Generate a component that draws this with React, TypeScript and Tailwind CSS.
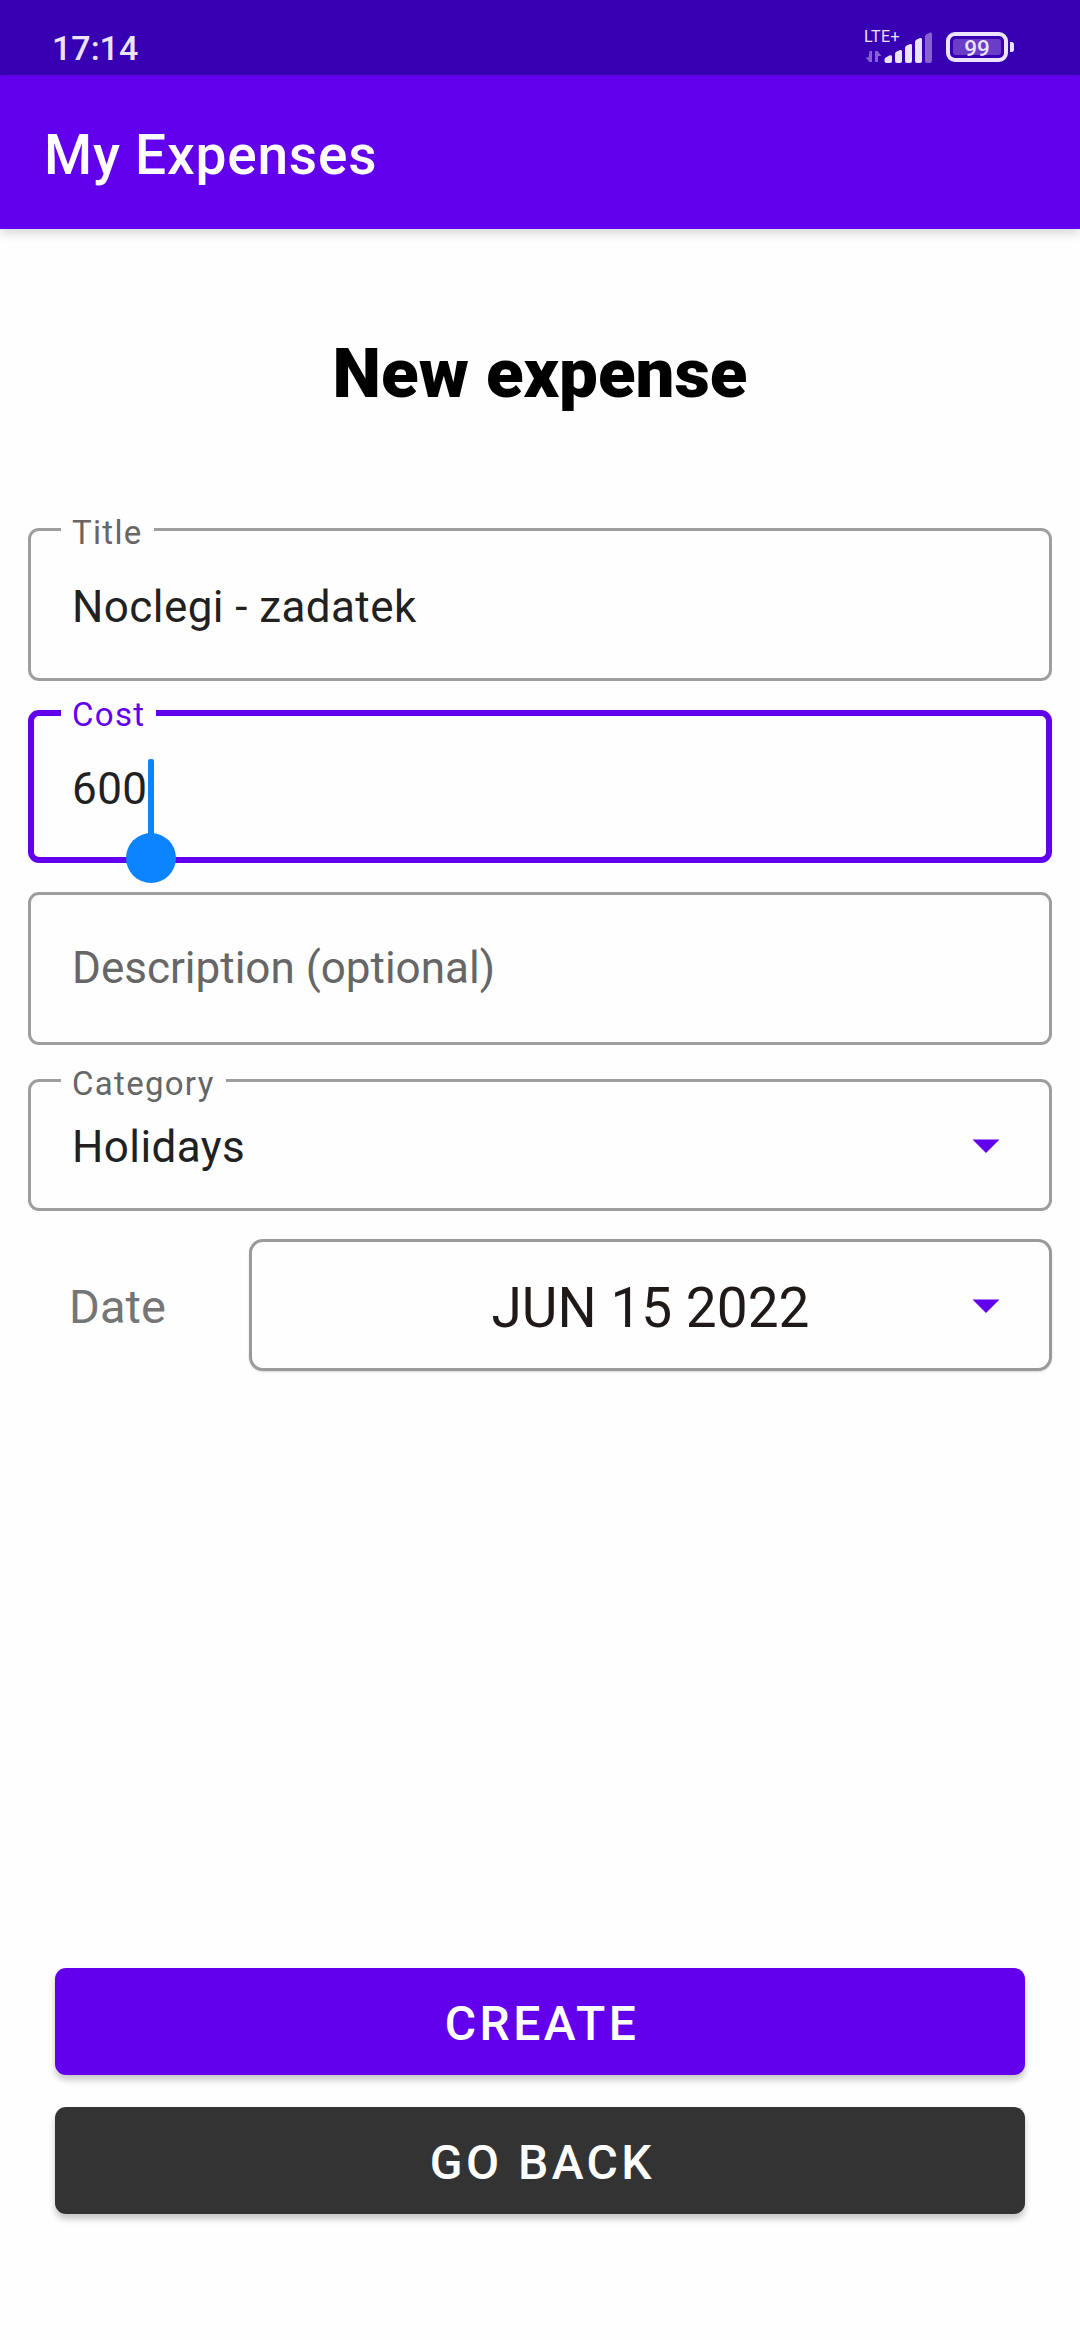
import type { ReactNode } from "react";

function StatusBar() {
  return (
    <div className="flex h-[75px] items-start justify-between bg-[#3700b3] pl-[52px] pr-[66px] text-[#ebe3f8]">
      <span className="mt-[28px] text-[34px] leading-[41px] font-medium">17:14</span>
      <svg className="mt-[28px] h-[38px] w-[152px]" viewBox="862 28 152 38">
        <text x="864" y="42" fontSize="16" fill="#ebe3f8" textLength="35.500">LTE+</text>
        <g fill="#8662d1">
          <path d="M869.5 51v11l-4-4.500h3zM872 51v11h-2.500l-4-4.500h4V51z" />
          <path d="M875 62V51h2.500l4 5h-3.500v6z" />
          <path d="M925 44V36.500q0-1.500 1.500-2.200l3.500-1.800q2-.5 2 1.500V61q0 2-2 2h-3q-2 0-2-2z" />
        </g>
        <g fill="#ebe3f8">
          <path d="M884.500 59.500q0-1 1-1.700l3.500-2.300q3-1 3 1V61q0 2-2 2h-3.500q-2 0-2-2z" />
          <path d="M895 54q0-1.500 1.200-2.200l3.300-1.600q2.500-.7 2.500 1.300V61q0 2-2 2h-3q-2 0-2-2z" />
          <path d="M905 48q0-1.500 1.200-2.200l3.300-1.600q2.500-.7 2.500 1.300V61q0 2-2 2h-3q-2 0-2-2z" />
          <path d="M915 42q0-1.500 1.200-2.200l3.300-1.600q2.500-.7 2.500 1.300V61q0 2-2 2h-3q-2 0-2-2z" />
          <path d="M1010 42h1.500q2.500 0 2.500 2.500v5q0 2.500-2.500 2.500h-1.500z" />
        </g>
        <rect x="948" y="34" width="58" height="26" rx="7" fill="none" stroke="#ebe3f8" strokeWidth="4" />
        <rect x="953" y="39" width="48" height="16" rx="3" fill="#6a3cc7" />
        <text x="977" y="55.500" fontSize="22.500" fontWeight="500" fill="#ebe3f8" textAnchor="middle">99</text>
      </svg>
    </div>
  );
}

function Field({ label, focused, className, children }: { label?: string; focused?: boolean; className: string; children: ReactNode }) {
  return (
    <div
      className={`relative flex rounded-[11px] text-[44px] leading-[52px] tracking-[0.42px] text-[#212121] ${
        focused ? "border-[6px] border-[#6200ee] pl-[38px]" : "border-[3px] border-[#9e9e9e] pl-[41px]"
      } ${className}`}
    >
      {label && (
        <span
          className={`absolute bg-[#fefefe] px-[11px] text-[33px] leading-[38px] tracking-[1.3px] ${
            focused ? "-top-[20px] left-[27px] text-[#6200ee]" : "-top-[17px] left-[30px] text-[#666666]"
          }`}
        >
          {label}
        </span>
      )}
      {children}
    </div>
  );
}

function DropArrow() {
  return (
    <svg className="h-[14px] w-[28px]" viewBox="0 0 28 14">
      <path d="M.5.500h27L14 14z" fill="#6200ee" />
    </svg>
  );
}

export default function App() {
  return (
    <div className="flex h-[2340px] w-[1080px] flex-col overflow-hidden bg-[#fefefe] font-['Roboto',sans-serif]">
      <StatusBar />
      <header className="flex h-[154px] shrink-0 bg-[#6200ee] pl-[44px] shadow-[0_4px_10px_rgba(0,0,0,0.16)]">
        <h1 className="mt-[48px] text-[55px] leading-[64px] font-medium tracking-[0.8px] text-white">My Expenses</h1>
      </header>

      <h2 className="mt-[105px] text-center text-[69px] leading-[80px] font-black text-black">New expense</h2>

      <main className="mt-[114px] flex flex-col px-[28px]">
        <Field label="Title" className="h-[153px] pt-[50px]">
          Noclegi - zadatek
        </Field>
        <Field label="Cost" focused className="mt-[29px] h-[153px] pt-[47px]">
          600
          <span className="absolute top-[43px] left-[114px] h-[80px] w-[6px] rounded-t-[2px] bg-[#0d84ff]" />
          <span className="absolute top-[117px] left-[92px] size-[50px] rounded-full bg-[#0d84ff]" />
        </Field>
        <Field className="mt-[29px] h-[153px] pt-[47px]">
          <span className="tracking-normal text-[#666666]">Description (optional)</span>
        </Field>
        <Field label="Category" className="mt-[34px] h-[132px] justify-between pt-[39px] pr-[49px]">
          Holidays
          <span className="mt-[18px] flex">
            <DropArrow />
          </span>
        </Field>
        <div className="mt-[28px] flex">
          <span className="mt-[40px] w-[221px] pl-[41px] text-[47px] leading-[55px] tracking-[0.1px] text-[#757575]">Date</span>
          <div className="relative h-[132px] flex-1 rounded-[14px] border-[3px] border-[#9a9a9a] bg-[#fefefe] shadow-[0_1px_2px_rgba(0,0,0,0.15)]">
            <div className="pt-[34px] text-center text-[55px] leading-[64px] text-[#1f1a17]">JUN 15 2022</div>
            <span className="absolute top-[57px] right-[49px] flex">
              <DropArrow />
            </span>
          </div>
        </div>
      </main>

      <footer className="mt-auto mb-[126px] flex flex-col gap-[32px] px-[55px] text-center text-[48px] leading-[56px] font-medium tracking-[3.45px] text-white">
        <button className="h-[107px] rounded-[11px] bg-[#6200ee] pt-[4px] pl-[4px] shadow-[0_5px_6px_rgba(0,0,0,0.22)]">CREATE</button>
        <button className="h-[107px] rounded-[11px] bg-[#333333] pt-[4px] pl-[5px] shadow-[0_5px_6px_rgba(0,0,0,0.22)]">GO BACK</button>
      </footer>
    </div>
  );
}
